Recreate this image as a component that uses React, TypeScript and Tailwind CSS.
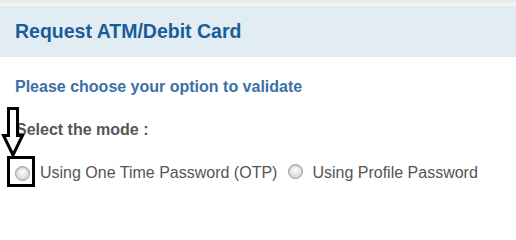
import React from 'react';

const Radio: React.FC = () => (
    <span className="inline-block w-[15px] h-[15px] rounded-full border border-[#9a9a9a] bg-[radial-gradient(circle_at_50%_40%,#ffffff_0%,#e6e6e6_45%,#c4c4c4_100%)] shadow-[inset_0_1px_1px_rgba(0,0,0,0.15)]" />
);

export default function App() {
    return (
        <div className="w-[516px] h-[200px] bg-white overflow-hidden relative font-['Liberation_Sans',Arial,sans-serif]">
            <div className="h-[6px] bg-gradient-to-b from-[#e9e9e9] to-[#f6f6f6]" />
            <div className="h-[51px] bg-[#e1edf2] flex items-center pl-[15px]">
                <h1 className="text-[19.5px] font-bold text-[#1b5c9b] leading-none">Request ATM/Debit Card</h1>
            </div>
            <div className="pl-[15px] pt-[22px]">
                <p className="text-[16px] font-bold text-[#3b70a6] leading-none">Please choose your option to validate</p>
                <p className="mt-[27px] pl-[1px] text-[16px] font-bold text-[#555555] leading-none">Select the mode :</p>
                <div className="mt-[26px] flex items-center text-[16px] text-[#555555] leading-none">
                    <Radio />
                    <span className="ml-[10px]">Using One Time Password (OTP)</span>
                    <span className="ml-[11px]"><Radio /></span>
                    <span className="ml-[9px]">Using Profile Password</span>
                </div>
            </div>

            {/* annotation arrow + box */}
            <svg className="absolute left-0 top-[105px]" width="40" height="85" viewBox="0 0 40 85">
                <path d="M8.5 3.5 H17.5 V30.5 H22.5 L13 50 L3.5 30.5 H8.5 Z" fill="white" stroke="black" strokeWidth="3" strokeLinejoin="miter" />
                <rect x="8.5" y="52.5" width="25" height="28" fill="none" stroke="black" strokeWidth="3" />
            </svg>
        </div>
    );
}
